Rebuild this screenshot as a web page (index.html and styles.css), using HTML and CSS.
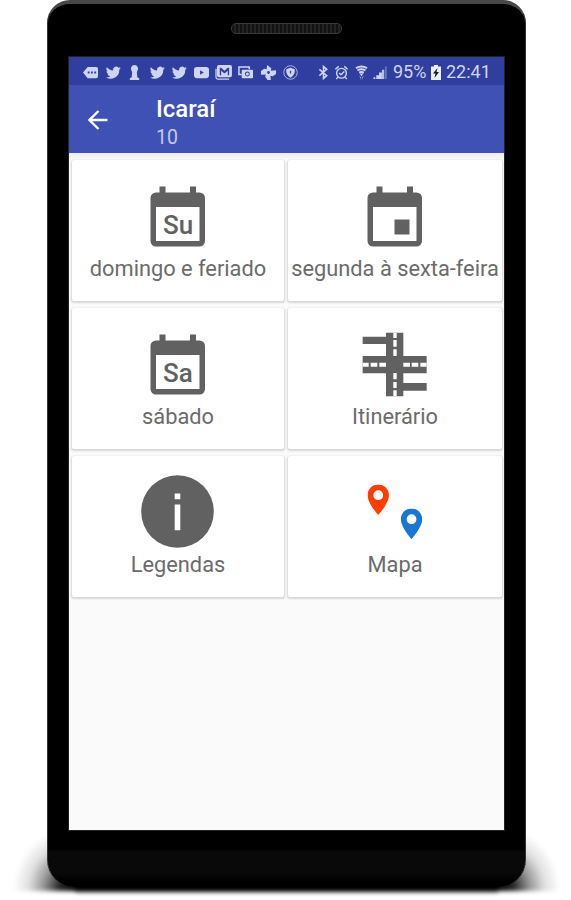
FILE: index.html
```html
<!DOCTYPE html>
<html lang="pt-BR">
<head>
<meta charset="utf-8">
<title>Icaraí</title>
<link rel="stylesheet" href="styles.css">
</head>
<body>
<svg class="defs" width="0" height="0" aria-hidden="true">
  <symbol id="bird" viewBox="0 0 24 24"><path d="M23.6 4.9c-.9.4-1.800.6-2.800.8 1-.6 1.800-1.600 2.200-2.700-.9.6-2 1-3.100 1.200a4.900 4.900 0 0 0-8.400 4.500C7.400 8.500 3.800 6.500 1.400 3.500a4.900 4.900 0 0 0 1.500 6.600c-.8 0-1.600-.2-2.200-.6 0 2.300 1.600 4.400 3.900 4.900-.7.2-1.500.2-2.200.1.6 2 2.400 3.400 4.600 3.400A9.900 9.900 0 0 1 0 19.900 13.900 13.900 0 0 0 21.200 7.500c.9-.7 1.700-1.600 2.400-2.600z"/></symbol>
  <symbol id="calendar" viewBox="0 0 73 73"><path fill-rule="evenodd" d="M18.500 7.500h6v6h24.500v-6h6v6h3.500a5.500 5.500 0 0 1 5.500 5.500v43a5.500 5.500 0 0 1-5.500 5.500h-43.500a5.500 5.500 0 0 1-5.500-5.500v-43a5.500 5.500 0 0 1 5.500-5.500h3.500zM15 28v34h43.500V28z"/></symbol>
  <symbol id="pin" viewBox="5 2 14 20"><path d="M12 2C8.130 2 5 5.130 5 9c0 5.250 7 13 7 13s7-7.750 7-13c0-3.870-3.130-7-7-7zm0 10.200a3.200 3.200 0 1 1 0-6.400 3.200 3.200 0 0 1 0 6.400z"/></symbol>
</svg>
<div class="stage">
  <div class="ground"></div>
  <div class="phone">
    <div class="speaker"></div>
    <div class="screen">
      <div class="status">
        <div class="notices">
          <svg viewBox="0 0 18 16"><path fill-rule="evenodd" d="M6 2h9q2 0 2 2v8q0 2-2 2H6L1 8zM6 7v2h2V7zm3.500 0v2h2V7zM13 7v2h2V7z"/></svg>
          <svg class="first-bird"><use href="#bird"/></svg>
          <svg viewBox="0 0 18 16"><path d="M9 0a4 4 0 0 1 3 6.500L11.500 8l.5 5 2 1v2H4v-2l2-1 .5-5L6 6.500A4 4 0 0 1 9 0z"/></svg>
          <svg><use href="#bird"/></svg>
          <svg><use href="#bird"/></svg>
          <svg viewBox="0 0 18 16"><path fill-rule="evenodd" d="M4 2h10q3 0 3 3v6q0 3-3 3H4q-3 0-3-3V5q0-3 3-3zm3.500 3.500v5l4-2.500z"/></svg>
          <svg viewBox="0 0 18 16"><path fill-rule="evenodd" d="M4 0h12q2 0 2 2v9q0 2-2 2H4q-2 0-2-2V2q0-2 2-2zm1 3v8h1.500V6L10 9l3.500-3v5H15V3h-1.500L10 6 6.500 3z"/><path d="M1 4v9q0 2 2 2h12" fill="none" stroke="currentColor" stroke-width="1.300"/></svg>
          <svg viewBox="0 0 18 16"><path fill="none" stroke="currentColor" stroke-width="1.600" d="M13 4.500V2H2v8h3"/><path fill-rule="evenodd" d="M6 5h10q1 0 1 1v7q0 1-1 1H6q-1 0-1-1V6q0-1 1-1zm5 2a2.600 2.600 0 1 0 0 5.200A2.600 2.600 0 0 0 11 7z"/><circle cx="11" cy="9.600" r="1.600"/></svg>
          <svg viewBox="0 0 18 16"><path fill-rule="evenodd" d="M7.500 0l4.500 3.500-.5 2.500 5.500-.5v4L13.500 12l-2.500-.5.5 4.500H8l-2.500-3.500.5-2.500-5 .5v-4L4.500 4l2.500.5zM9 6.500a1.500 1.500 0 1 0 0 3 1.500 1.500 0 0 0 0-3z"/></svg>
          <svg viewBox="0 0 18 16"><circle cx="9" cy="8" r="7.200" fill="none" stroke="currentColor" stroke-width="1" opacity=".8"/><path fill-rule="evenodd" d="M9 3l4.500 1.500v3Q13 11 9 13.500 5 11 4.500 7.500v-3zM8.300 6v3h1.400V6z"/></svg>
        </div>
        <div class="system">
          <svg class="bluetooth" viewBox="0 0 12 16"><path fill="none" stroke="currentColor" stroke-width="1.700" d="M1.500 4.500l8 7L6 14.500v-13l3.500 3-8 7"/></svg>
          <svg class="alarm" viewBox="0 0 16 16"><circle cx="8" cy="8.800" r="5.200" fill="none" stroke="currentColor" stroke-width="1.500"/><path fill="none" stroke="currentColor" stroke-width="1.500" d="M1.500 4.500l3.500-3M11 1.500l3.500 3M5.500 8.500l2 2 3.500-3.500M4 13l-1.500 2M12 13l1.500 2"/></svg>
          <svg class="wifi" viewBox="0 0 14 16"><path fill="none" stroke="currentColor" stroke-width="2.100" d="M1 3.200q6-3.200 12 0M2.700 5.800q4.300-2.400 8.600 0M4.500 8.200q2.500-1.300 5 0"/><path d="M5 9h4l-2 3z"/><path opacity=".65" d="M4.500 11l2 2v3zM9.500 11l-2 2v3z"/></svg>
          <svg class="signal" viewBox="0 0 15 16"><path d="M0 13h2v2H0zM3 11h3v4H3zM6 8h3v7H6z"/><path opacity=".85" d="M9 5h2.500v10H9z"/><path opacity=".45" d="M12.500 1.500H14V15h-1.500z"/></svg>
          <span class="percent">95%</span>
          <svg class="battery" viewBox="0 0 10 15"><path fill="#eef" d="M3 0h4v1.500h3V15H0V1.500h3z"/><path fill="#161a38" d="M6.500 3L2 8.500h2.500L3.500 13 8 7H5.500z"/></svg>
          <span class="clock">22:41</span>
        </div>
      </div>
      <header class="appbar">
        <svg class="back" viewBox="0 0 20 20"><path fill="none" stroke="#fff" stroke-width="2.300" d="M19.500 10H2M10.500 1L1.500 10l9 9"/></svg>
        <div class="heading">
          <h1>Icaraí</h1>
          <p>10</p>
        </div>
      </header>
      <main class="grid">
        <section class="card">
          <svg class="icon"><use href="#calendar"/><text class="day" x="37" y="55">Su</text></svg>
          <span class="label">domingo e feriado</span>
        </section>
        <section class="card">
          <svg class="icon"><use href="#calendar"/><path d="M36.500 40.500h15v15h-15z"/></svg>
          <span class="label">segunda à sexta-feira</span>
        </section>
        <section class="card">
          <svg class="icon"><use href="#calendar"/><text class="day" x="37" y="55">Sa</text></svg>
          <span class="label">sábado</span>
        </section>
        <section class="card">
          <svg class="icon" viewBox="0 0 219 219"><g transform="translate(14 17)"><path d="M70 0h52v70h70v52h-70v29h70v23h-70v17H70v-69H0V70h70V34H0V12h70z"/><path fill="#fff" d="M92 0h10v16H92zM92 22h10v20H92zM92 50h10v20H92zM92 121h10v19H92zM92 148h10v18H92zM92 173h10v18H92zM0 90h18v12H0zM24 90h20v12H24zM50 90h20v12H50zM122 90h20v12h-20zM147 90h20v12h-20zM173 90h19v12h-19z"/></g></svg>
          <span class="label">Itinerário</span>
        </section>
        <section class="card">
          <svg class="icon" viewBox="0 0 73 73"><circle cx="36.500" cy="36.500" r="36.300"/><path fill="#fff" d="M33.700 18.500h5.600v5.800h-5.600zM33.700 29.500h5.600v25.700h-5.600z"/></svg>
          <span class="label">Legendas</span>
        </section>
        <section class="card">
          <svg class="icon" viewBox="0 0 73 73"><use href="#pin" x="9.500" y="9.500" width="21.500" height="30.500" fill="#ff3d00"/><use href="#pin" x="42.800" y="33.500" width="21.500" height="30.500" fill="#1976d2"/></svg>
          <span class="label">Mapa</span>
        </section>
      </main>
    </div>
  </div>
</div>
</body>
</html>
```

FILE: styles.css
```css
* {
  box-sizing: border-box;
}

body {
  margin: 0;
  background: #fff;
  font-family: Roboto, "Liberation Sans", sans-serif;
}

.defs {
  position: absolute;
}

.stage {
  position: relative;
  height: 900px;
  overflow: hidden;
  padding-left: 47px;
}

/* soft contact shadow below and beside the phone */
.ground {
  position: absolute;
  left: 0;
  top: 815px;
  width: 571px;
  height: 85px;
  background:
    radial-gradient(ellipse 62px 62px at 75px 74px, #000 0, rgba(0, 0, 0, .85) 25%, rgba(0, 0, 0, .42) 50%, rgba(0, 0, 0, .12) 75%, transparent 100%) no-repeat 0 0 / 75px 76px,
    radial-gradient(ellipse 62px 62px at 0 74px, #000 0, rgba(0, 0, 0, .85) 25%, rgba(0, 0, 0, .42) 50%, rgba(0, 0, 0, .12) 75%, transparent 100%) no-repeat 498px 0 / 73px 76px,
    linear-gradient(#000, #000) no-repeat 75px 50px / 423px 27px;
  filter: blur(2px);
}

.phone {
  position: relative;
  width: 479px;
  height: 887px;
  display: flex;
  flex-direction: column;
  align-items: flex-start;
  padding: 19px 20px 0 21px;
  border: 1px solid #333;
  border-top: 4px solid #484848;
  border-bottom: 0;
  border-radius: 23px 23px 27px 27px;
  background: linear-gradient(#000 845px, #090909 848px, #090909 868px, #000 878px);
}

.speaker {
  width: 111px;
  height: 11px;
  margin-left: 162px;
  border: 1px solid #3a3a3a;
  border-radius: 5px;
  background: repeating-linear-gradient(90deg, #111 0 2px, #242424 2px 4px);
}

.screen {
  width: 435px;
  height: 773px;
  margin-top: 23px;
  background: #fafafa;
  box-shadow: 0 0 0 1px #222;
}

.status {
  height: 28px;
  display: flex;
  align-items: center;
  padding: 2px 13px 0 13px;
  background: #303f9f;
  color: #cfd4f3;
}

.status svg {
  fill: currentColor;
}

.notices {
  display: flex;
  gap: 5.200px;
}

.notices svg {
  width: 17px;
  height: 15px;
}

.notices .first-bird {
  margin: 0 -1px 0 1px;
}

.system {
  display: flex;
  align-items: center;
  margin-left: auto;
  font-size: 18px;
  line-height: 20px;
}

.bluetooth {
  width: 11px;
  height: 15px;
  margin-right: 5px;
}

.alarm {
  width: 15px;
  height: 15px;
  margin-right: 6px;
}

.wifi {
  width: 13px;
  height: 15px;
  margin-right: 5px;
}

.signal {
  width: 15px;
  height: 15px;
  margin-right: 5px;
}

.percent {
  width: 34px;
  margin-right: 4px;
}

.battery {
  width: 10px;
  height: 15px;
  margin-right: 5px;
}

.clock {
  width: 45px;
}

.appbar {
  height: 68px;
  display: flex;
  padding: 10px 0 0 19px;
  background: #3f51b5;
}

.back {
  width: 20px;
  height: 20px;
  margin: 14.5px 48px 0 0;
}

.heading h1 {
  margin: 0;
  font-size: 24px;
  line-height: 28px;
  font-weight: 500;
  color: #fff;
}

.heading p {
  margin: 0;
  font-size: 19.5px;
  line-height: 29px;
  color: #c3c9eb;
}

.grid {
  display: grid;
  grid-template-columns: 212px 214px;
  grid-auto-rows: 141px;
  gap: 7px 4px;
  padding: 7px 2px 0 3px;
  background: linear-gradient(#ececec, #fafafa 7px);
}

.card {
  display: flex;
  flex-direction: column;
  align-items: center;
  padding-top: 18.5px;
  border-radius: 2px;
  background: #fff;
  box-shadow: 0 1px 2px 1px rgba(0, 0, 0, .14);
}

.icon {
  width: 73px;
  height: 73px;
  flex: none;
  margin-right: 1.500px;
  fill: #616161;
}

.day {
  font-size: 26px;
  font-weight: 500;
  text-anchor: middle;
}

.label {
  margin-top: 3px;
  font-size: 21.8px;
  line-height: 28px;
  white-space: nowrap;
  color: #6b6b6b;
}
```
